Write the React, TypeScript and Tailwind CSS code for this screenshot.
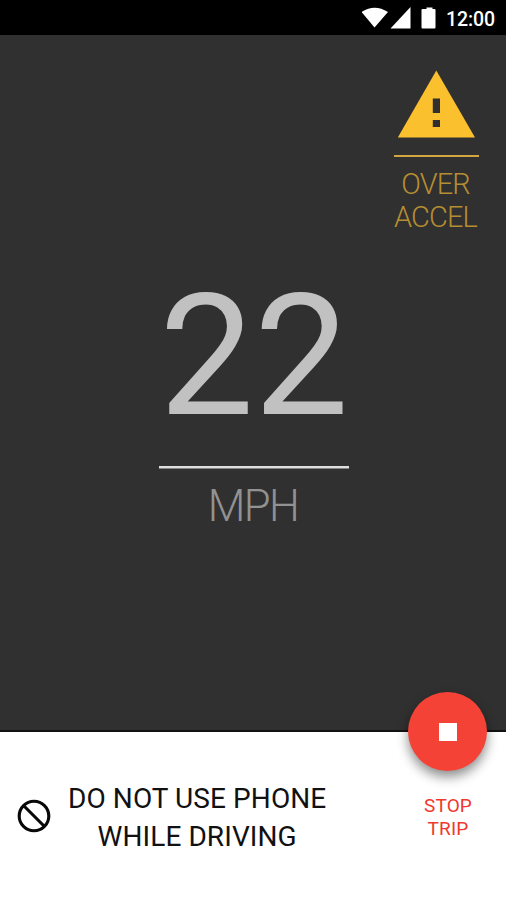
export default function App() {
  return (
    <main className="flex h-[900px] w-[506px] flex-col overflow-hidden bg-[#303030] font-['Roboto',sans-serif]">
      <header className="flex h-[35px] shrink-0 items-center justify-end bg-black pr-[11px] text-white">
        <svg className="h-[22px] w-[76px]" viewBox="0 0 76 22" fill="white" aria-hidden="true">
          <path d="M-.5 5Q12.5-3.5 26 5L12.5 20.5Z" />
          <path d="M48.5 0V21.5H28.5Z" />
          <path d="M64.5 .5h6v1.5h2q1 0 1 1v17.5q0 1-1 1H60.5q-1 0-1-1V3q0-1 1-1h4z" />
        </svg>
        <span className="ml-[8.5px] mt-[4px] text-[19.5px] font-medium leading-none tracking-[-0.1px]">12:00</span>
      </header>
      <section className="flex h-[695px] shrink-0 flex-col">
        <div className="mr-[27.5px] mt-[35px] flex h-[170px] w-[85px] flex-col items-center self-end text-[#b58d32]">
          <svg className="h-[68px] w-[78px]" viewBox="0 0 78 68" aria-hidden="true">
            <path d="M39.3 .5L78 67.5H.8Z" fill="#fbc02d" />
            <path d="M35.8 28.5h7.2v14.5h-7.2zM35.8 50h7.2v7h-7.2z" fill="#303030" />
          </svg>
          <div className="mt-[17px] h-[2px] w-full bg-[#d4a342]" />
          <div className="-ml-px mt-[11px] text-center text-[29px] font-light leading-[33px] tracking-[-0.9px]">OVER<br />ACCEL</div>
        </div>
        <div className="mt-[27px] flex flex-col items-center text-[#c1c1c1]">
          <div className="ml-[2px] text-[168.5px] font-normal leading-[180px]">22</div>
          <div className="ml-px mt-[19px] h-[3px] w-[190px] border-b border-[#858585] bg-[#dedede]" />
          <div className="mt-[13px] text-[43.5px] font-light leading-[50px] tracking-[-1.6px] text-[#929292]">MPH</div>
        </div>
      </section>
      <footer className="flex min-h-0 flex-1 justify-between border-t-2 border-[#121212] bg-white">
        <div className="mt-[46px] flex h-20 items-center pl-[17px]">
          <svg className="-mt-[4px] h-[34px] w-[34px]" viewBox="0 0 34 34" fill="none" stroke="#080808" strokeWidth="3.1"><circle cx="17" cy="17" r="14.8" /><path d="M6.5 6.5l21 21" /></svg>
          <p className="ml-[17px] text-center text-[28px] leading-[38px] tracking-[0.08px] text-[#111111]">DO NOT USE PHONE<br />WHILE DRIVING</p>
        </div>
        <div className="relative z-10 -mt-[40px] mr-[18px] flex w-20 flex-col items-center">
          <button className="mr-px flex h-[79px] w-[79px] shrink-0 items-center justify-center rounded-full bg-[#f44336] shadow-[0_6px_12px_rgba(0,0,0,0.45)]"><span className="h-[18px] w-[18px] bg-white" /></button>
          <div className="mt-[23px] text-center text-[19px] leading-[23px] tracking-[0.15px] text-[#f0382d]">STOP<br />TRIP</div>
        </div>
      </footer>
    </main>
  );
}
